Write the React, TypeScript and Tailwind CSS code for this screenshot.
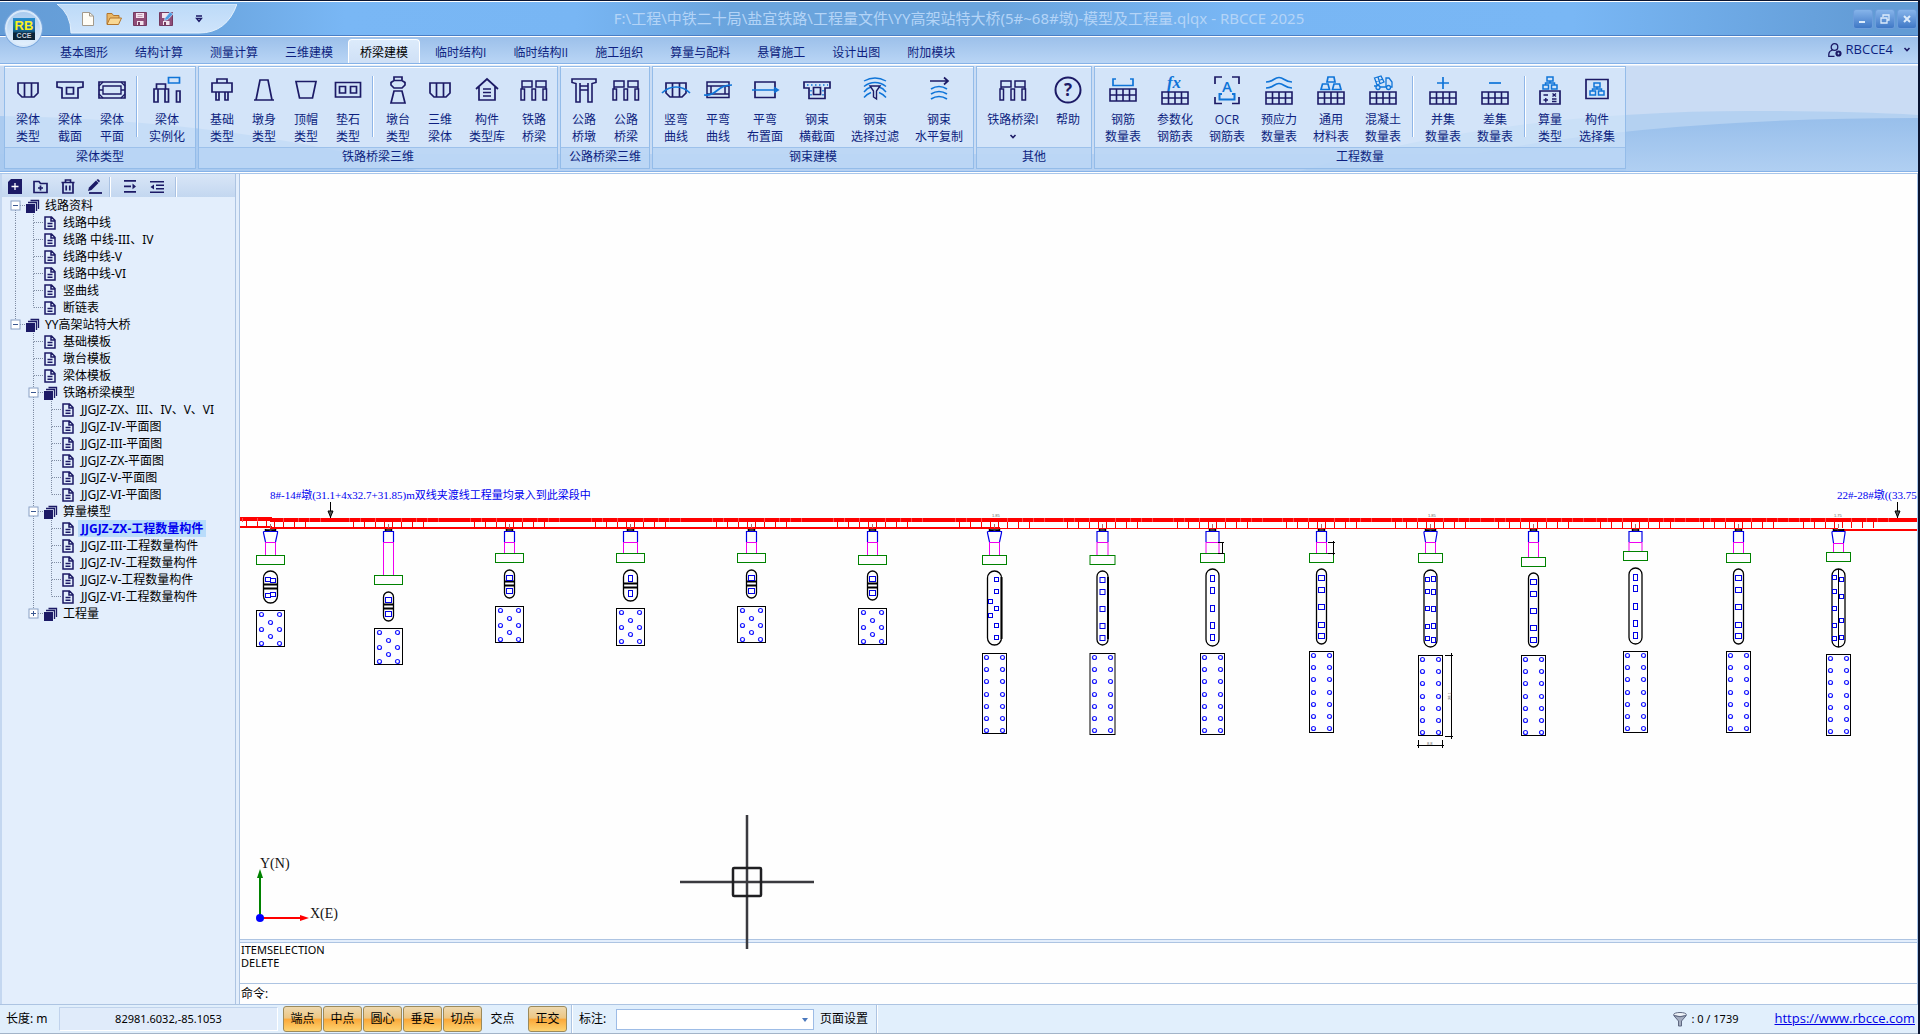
import { ReactNode } from 'react';

const NAVY = '#1c1a66';
const BLUE = '#0f74d8';

/* ---------- ribbon icons, drawn on a 32 × 32 box centred on 0,0 ---------- */

function Glyph({ children }: { children: ReactNode }) {
  return (
    <svg viewBox="-16 -16 32 32" className="size-8 shrink-0" fill="none" stroke={NAVY} strokeWidth="1.7" aria-hidden="true">
      {children}
    </svg>
  );
}

const Beam = () => <path d="M-10 -7H10V3L6 7H-6L-10 3ZM-3.5 -7V7M3.5 -7V7" />;
const Grid = ({ y }: { y: number }) => (
  <path transform={`translate(0 ${y})`} d="M-13 0H13V12H-13ZM-13 6H13M-6.5 0V12M0 0V12M6.5 0V12" strokeWidth="1.6" />
);
const RailBridge = () => (
  <path d="M-12 -9H-2V-3H-12ZM2 -9H12V-3H2ZM-13 -1H-9.5V10H-13ZM-2 -1H1.5V10H-2ZM9 -1H12.5V10H9ZM-12 -3V-1M12 -3V-1" strokeWidth="1.5" />
);
const Org = ({ y = 0 }: { y?: number }) => (
  <path transform={`translate(0 ${y})`} stroke={BLUE} strokeWidth="1.5" d="M-3 -6H3V-2H-3ZM-7 2H-1.5V6H-7ZM1.5 2H7V6H1.5ZM0 -2V0M-4.5 2V0H4.5V2" />
);

const icons: Record<string, ReactNode> = {
  beam: <Beam />,
  section: (
    <>
      <path d="M-13 -8H13V-3L8 -2V8H-8V-2L-13 -3Z" />
      <path d="M-3.5 -2.5H3.5V4H-3.5Z" />
    </>
  ),
  plan: (
    <>
      <path d="M-13 -8H13V8H-13Z" />
      <path d="M-9 -4H9V4H-9ZM-13 -4L-9 -8M-13 4L-9 8M13 -4L9 -8M13 4L9 8M-13 0H-9M9 0H13" strokeWidth="1.4" />
    </>
  ),
  instance: (
    <>
      <path d="M1.5 -12.5H12.5V-7H1.5Z" stroke={BLUE} />
      <path d="M-10.5 -6H-1.5V-1H-10.5ZM-13 -1H-9V12H-13ZM-2 -1H1.5V12H-2ZM9.5 1H13V12H9.5Z" />
    </>
  ),
  foundation: <path d="M-5 -11H5V-7H-5ZM-10 -7H10V2H-10ZM-6 2V10H-3V2M3 2V10H6V2" />,
  pier: <path d="M-4 -10H4L8 10H-8ZM-10 10H10" />,
  cap: <path d="M-10 -8.5H10L6.5 8H-6.5Z" />,
  pad: <path d="M-12.5 -7.5H12.5V7H-12.5ZM-8.5 -3.5H-2.5V3H-8.5ZM2.5 -3.5H8.5V3H2.5Z" />,
  abutment: <path d="M-4 -13H4V-9.5H-4ZM-4 -9.5L-7 -7.5V-5L-4 -2H4L7 -5V-7.5L4 -9.5M-4 1H4L7 13H-7Z" />,
  house: <path d="M-11 -1L0 -11L11 -1M-8 -3V10H8V-3M-4 -1H4M-4 2.5H4M-4 6H4" />,
  rail: <RailBridge />,
  roadPier: <path d="M-12 -11H12V-7.5L8 -6.5V12H4V0H-4V12H-8V-6.5L-12 -7.5ZM-4 -7V0M4 -7V0M-4 -4H4M-4 0H4" strokeWidth="1.6" />,
  bendV: (
    <>
      <Beam />
      <path d="M-14 3Q-8 -3 0 -3T14 3" stroke={BLUE} />
    </>
  ),
  bendH: (
    <>
      <path d="M-11 -8H11V7.5H-11ZM-7 -4H7V4H-7ZM-11 -4H-7M-11 4H-7M7 -4H11M7 4H11" strokeWidth="1.5" />
      <path d="M-14 5C0 6 -2 -5 14 -5" stroke={BLUE} />
    </>
  ),
  layout: (
    <>
      <path d="M-10 -8H10V7.5H-10Z" />
      <path d="M-13 0H12M9 -2.5L13 0L9 2.5" stroke={BLUE} />
    </>
  ),
  tendonSection: (
    <>
      <path d="M-13 -8H13V-2H8V8.500H-8V-2H-13Z" />
      <path d="M-3.500 -2.500H3.500V4.500H-3.500Z" />
      <path d="M-10 -5H11" stroke={BLUE} strokeDasharray="1.500 2.500" strokeWidth="1.500" />
      <path d="M-6 0V7M6 0V7" stroke={BLUE} strokeDasharray="1.500 2.500" strokeWidth="1.500" />
    </>
  ),
  filter: (
    <g strokeWidth="1.400">
      <path d="M-11 -9Q0 -15 11 -9M-11 -3.500Q-6 -7.500 0 -7.500T11 -3.500M-11 2Q-8 -2 -4 -3M11 2Q8 -2 4 -3M-11 7.500Q-8 4 -4 2.500M11 7.500Q8 4 4 2.500" stroke={BLUE} />
      <path d="M-5 -4H5L1.500 1V9L-1.500 7V1Z" />
    </g>
  ),
  copy: (
    <>
      <path d="M-9 -9H9M5 -12.500L9 -9L5 -5.500" />
      <path d="M-8 -1Q0 -6 8 -1M-8 4Q0 -1 8 4M-8 9Q0 4 8 9" stroke={BLUE} />
    </>
  ),
  help: (
    <>
      <circle r="12.500" strokeWidth="2" />
      <text y="6" textAnchor="middle" fill={NAVY} stroke="none" className="font-['Open_Sans'] text-[17px] font-bold">?</text>
    </>
  ),
  rebar: (
    <>
      <path d="M-7 -11H-10V-4.500H10V-11H7" stroke={BLUE} />
      <Grid y={-1} />
    </>
  ),
  param: (
    <>
      <text y="-2" x="-1" textAnchor="middle" fill={BLUE} stroke="none" className="font-['Liberation_Serif'] text-[17px] font-bold italic">fx</text>
      <Grid y={2} />
    </>
  ),
  ocr: (
    <>
      <path d="M-12 -6V-13H-5M12 -6V-13H5M-12 7V13.500H-5M12 7V13.500H5" />
      <text y="2" textAnchor="middle" fill={BLUE} stroke="none" className="font-['Open_Sans'] text-[15px] font-semibold">A</text>
      <path d="M-5 4H-7.500V9.500H7.500V4H5" stroke={BLUE} strokeWidth="2" />
    </>
  ),
  prestress: (
    <>
      <path d="M-13 -8C-6 -8 -5 -12.500 0 -12.500S6 -8 13 -8M-13 -2C-6 -2 -5 -6.500 0 -6.500S6 -2 13 -2" stroke={BLUE} />
      <Grid y={2} />
    </>
  ),
  material: (
    <>
      <path d="M-3 -13H3L4 -8H-4ZM-8.500 -6H-3L-1.500 -0.500H-10ZM3 -6H8.500L10 -0.500H1.500Z" stroke={BLUE} />
      <Grid y={2} />
    </>
  ),
  concrete: (
    <>
      <g stroke={BLUE} strokeWidth="1.300">
        <path d="M-8.500 -12L-2 -14L1 -8L-6 -5ZM-5 -13L-3 -6.500M-7 -8.500L0 -11M-9 -4H-7M-3 -3H3.500M3 -3V-12H6L9 -8V-3H8" />
        <circle cx="-5" cy="-2.500" r="2" />
        <circle cx="5.500" cy="-2.500" r="2" />
      </g>
      <Grid y={2} />
    </>
  ),
  union: (
    <>
      <path d="M-6 -7H6M0 -13V-1" stroke={BLUE} />
      <Grid y={2} />
    </>
  ),
  diff: (
    <>
      <path d="M-6 -7H6" stroke={BLUE} />
      <Grid y={2} />
    </>
  ),
  calc: (
    <>
      <Org y={-7} />
      <path d="M-10 1H10V14H-10Z" />
      <path d="M-6.500 5H-2M-6.500 10H-2M-4.200 8V12.500M2.500 3.500L6 6.500M6 3.500L2.500 6.500M2 9H6.500M2 11.500H6.500" strokeWidth="1.400" />
    </>
  ),
  pick: (
    <>
      <path d="M-11 -10.500H11V8.500H-11Z" />
      <Org y={-1} />
    </>
  ),
};

/* ---------- ribbon ---------- */

type Item = { icon: string; a: string; b?: string; size?: 's' | 'm' | 'l' | 'xl'; menu?: boolean; sep?: boolean };

const widths = { s: 'w-[42px]', m: 'w-[52px]', l: 'w-16', xl: 'w-[68px]' };

const groups: { title: string; items: Item[] }[] = [
  {
    title: '梁体类型',
    items: [
      { icon: 'beam', a: '梁体', b: '类型' },
      { icon: 'section', a: '梁体', b: '截面' },
      { icon: 'plan', a: '梁体', b: '平面' },
      { icon: 'instance', a: '梁体', b: '实例化', size: 'm', sep: true },
    ],
  },
  {
    title: '铁路桥梁三维',
    items: [
      { icon: 'foundation', a: '基础', b: '类型' },
      { icon: 'pier', a: '墩身', b: '类型' },
      { icon: 'cap', a: '顶帽', b: '类型' },
      { icon: 'pad', a: '垫石', b: '类型' },
      { icon: 'abutment', a: '墩台', b: '类型', sep: true },
      { icon: 'beam', a: '三维', b: '梁体' },
      { icon: 'house', a: '构件', b: '类型库', size: 'm' },
      { icon: 'rail', a: '铁路', b: '桥梁' },
    ],
  },
  {
    title: '公路桥梁三维',
    items: [
      { icon: 'roadPier', a: '公路', b: '桥墩' },
      { icon: 'rail', a: '公路', b: '桥梁' },
    ],
  },
  {
    title: '钢束建模',
    items: [
      { icon: 'bendV', a: '竖弯', b: '曲线' },
      { icon: 'bendH', a: '平弯', b: '曲线' },
      { icon: 'layout', a: '平弯', b: '布置面', size: 'm' },
      { icon: 'tendonSection', a: '钢束', b: '横截面', size: 'm' },
      { icon: 'filter', a: '钢束', b: '选择过滤', size: 'l' },
      { icon: 'copy', a: '钢束', b: '水平复制', size: 'l' },
    ],
  },
  {
    title: '其他',
    items: [
      { icon: 'rail', a: '铁路桥梁I', size: 'xl', menu: true },
      { icon: 'help', a: '帮助' },
    ],
  },
  {
    title: '工程数量',
    items: [
      { icon: 'rebar', a: '钢筋', b: '数量表', size: 'm' },
      { icon: 'param', a: '参数化', b: '钢筋表', size: 'm' },
      { icon: 'ocr', a: 'OCR', b: '钢筋表', size: 'm' },
      { icon: 'prestress', a: '预应力', b: '数量表', size: 'm' },
      { icon: 'material', a: '通用', b: '材料表', size: 'm' },
      { icon: 'concrete', a: '混凝土', b: '数量表', size: 'm' },
      { icon: 'union', a: '并集', b: '数量表', size: 'm', sep: true },
      { icon: 'diff', a: '差集', b: '数量表', size: 'm' },
      { icon: 'calc', a: '算量', b: '类型', sep: true },
      { icon: 'pick', a: '构件', b: '选择集', size: 'm' },
    ],
  },
];

const Chevron = () => (
  <svg viewBox="0 0 8 6" className="h-1.5 w-2" fill="none" stroke={NAVY} strokeWidth="1.600" aria-hidden="true">
    <path d="M1.500 1L4 3.500L6.500 1" />
  </svg>
);

function RibbonItem({ item }: { item: Item }) {
  return (
    <>
      {item.sep && <span className="mx-[3px] mt-2 h-[61px] w-0.5 border-l border-[#8fb6e8] bg-white" />}
      <button className={`flex flex-col items-center pt-1.5 ${widths[item.size ?? 's']}`}>
        <Glyph>{icons[item.icon]}</Glyph>
        <span className="mt-[5px] whitespace-nowrap leading-[17px]">{item.a}</span>
        {item.b && <span className="whitespace-nowrap leading-[17px]">{item.b}</span>}
        {item.menu && <span className="flex h-[17px] items-center"><Chevron /></span>}
      </button>
    </>
  );
}

function Ribbon() {
  return (
    <section className="relative flex h-[109px] shrink-0 gap-0.5 border-y border-[#86b2e8] bg-[#cadcf4] pl-1 pt-0.5 text-xs text-[#0d1f80]">
      <svg viewBox="0 0 1918 107" preserveAspectRatio="none" className="absolute inset-0 size-full" aria-hidden="true">
        <defs>
          <linearGradient id="deep" x1="0" y1="0" x2="0" y2="1">
            <stop offset="0" stopColor="#98bfeb" />
            <stop offset="1" stopColor="#b0cff2" />
          </linearGradient>
        </defs>
        <path d="M1300 107Q1500 47 1750 47Q1850 47 1918 51V107Z" fill="#b4d1f1" />
        <path d="M1400 107Q1600 54 1918 54V107Z" fill="url(#deep)" />
        <path d="M0 52Q240 56 420 107H0Z" fill="#abcbf0" />
        <path d="M0 90H1626V107H0Z" fill="#a9caf0" fillOpacity="0.600" />
        <path d="M0 0.500H1918" stroke="#fff" strokeWidth="2" />
      </svg>
      {groups.map((g) => (
        <div key={g.title} className="relative flex h-[103px] flex-col border border-[#94bce9] bg-[#d9e9fb]/60">
          <div className="flex grow border-t border-white px-0.5">
            {g.items.map((it) => (
              <RibbonItem key={it.icon + it.a} item={it} />
            ))}
          </div>
          <div className="h-[21px] border-t border-[#9dc1eb] bg-[#b3d1f3]/70 text-center leading-[17px]">{g.title}</div>
        </div>
      ))}
    </section>
  );
}

/* ---------- title bar and tabs ---------- */

function QuickAccess() {
  const btn = 'relative flex w-[26px] justify-center';
  return (
    <div className="relative ml-[57px] flex h-[30px] w-[180px] items-center pl-[18px]">
      <svg viewBox="0 0 180 30" className="absolute inset-0 size-full" aria-hidden="true">
        <defs>
          <linearGradient id="qat" x1="0" y1="0" x2="0" y2="1">
            <stop offset="0" stopColor="#bcdaf8" />
            <stop offset="1" stopColor="#cfe4fb" />
          </linearGradient>
        </defs>
        <path d="M0 0H180Q170 29 142 29H14Q14 10 0 0Z" fill="url(#qat)" stroke="#e4f1fd" />
      </svg>
      <button className={btn} aria-label="新建">
        <svg viewBox="0 0 14 14" className="size-3.5"><path d="M1.500 0.500H8.500L12.500 4V13.500H1.500Z" fill="#fffdf6" stroke="#a39a8c" /><path d="M8.500 0.500V4H12.500" fill="none" stroke="#a39a8c" /></svg>
      </button>
      <button className={btn} aria-label="打开">
        <svg viewBox="0 0 16 14" className="h-3.5 w-4"><path d="M1 12V1.500H6L7.500 3.500H13V6" fill="#e9b765" stroke="#b3752c" /><path d="M1 12.500L4 6H15.500L12.500 12.500Z" fill="#f9d894" stroke="#b3752c" /></svg>
      </button>
      <button className={btn} aria-label="保存">
        <svg viewBox="0 0 14 14" className="size-3.5"><path d="M0.500 0.500H13.500V13.500H0.500Z" fill="#8f4d78" stroke="#74395f" /><path d="M3 1H11V6H3ZM4 9H10.500V13H4Z" fill="#f3e4ee" /><path d="M4.500 2.500H9.500M4.500 4.500H9.500" stroke="#b98aa8" strokeWidth="0.800" /><path d="M5 10H7V13H5Z" fill="#74395f" /></svg>
      </button>
      <button className={btn} aria-label="另存为">
        <svg viewBox="0 0 14 14" className="size-3.5"><path d="M0.500 0.500H13.500V13.500H0.500Z" fill="#8f4d78" stroke="#74395f" /><path d="M3 1H11V6H3ZM4 9H10.500V13H4Z" fill="#f3e4ee" /><path d="M5 10H7V13H5Z" fill="#74395f" /><path d="M6 6L11 0L14 2L9 7.500L5.500 8.500Z" fill="#4e9be2" stroke="#cfe4fb" strokeWidth="0.700" /></svg>
      </button>
      <button className="relative ml-3 flex w-4 justify-center" aria-label="自定义快速访问工具栏">
        <svg viewBox="0 0 8 8" className="size-2" fill="none" stroke={NAVY} strokeWidth="1.300"><path d="M1 1H7M1.500 3.500H6.500L4 6.500Z" /></svg>
      </button>
    </div>
  );
}

function TitleBar() {
  const win = 'flex size-5 items-center justify-center rounded-[3px] border border-[#6c9ddb] bg-gradient-to-b from-[#86b4ea] to-[#3f78c6]';
  return (
    <header className="relative flex h-[34px] shrink-0 items-start justify-between border-b border-[#4a7fc6] bg-[linear-gradient(90deg,#649cd6_0%,#6aa4de_10%,#79b7f5_18%,#78b6f4_30%,#6aa4dd_38%,#6aa4dd_52%,#78b6f4_64%,#79b7f5_82%,#629bd5_98%)] pt-0.5">
      <QuickAccess />
      <h1 className="absolute inset-x-0 top-1.5 text-center font-['Noto_Sans','Noto_Sans_CJK_SC',sans-serif] text-[15px] leading-5 text-[#b4d4f7]">
        F:\工程\中铁二十局\盐宜铁路\工程量文件\YY高架站特大桥(5#~68#墩)-模型及工程量.qlqx - RBCCE 2025
      </h1>
      <div className="relative flex gap-0.5 pr-px pt-[5px]">
        <button className={win} aria-label="最小化">
          <svg viewBox="0 0 10 10" className="size-2.5"><path d="M1 8H7" stroke="#dcebfb" strokeWidth="2" /></svg>
        </button>
        <button className={win} aria-label="还原">
          <svg viewBox="0 0 10 10" className="size-2.5" fill="none" stroke="#dcebfb" strokeWidth="1.300"><path d="M3 3V1H9V6H7M1 4H7V9H1Z" /></svg>
        </button>
        <button className={win} aria-label="关闭">
          <svg viewBox="0 0 10 10" className="size-2.5"><path d="M2 2L8 8M8 2L2 8" stroke="#dcebfb" strokeWidth="2" /></svg>
        </button>
      </div>
    </header>
  );
}

const tabs = ['基本图形', '结构计算', '测量计算', '三维建模', '桥梁建模', '临时结构I', '临时结构II', '施工组织', '算量与配料', '悬臂施工', '设计出图', '附加模块'];

function TabRow() {
  return (
    <nav className="relative flex h-[27px] shrink-0 items-end justify-between border-t border-white bg-gradient-to-b from-[#9cc0ea] to-[#b9d5f5] text-xs text-[#0d1f80]">
      <div className="flex gap-[3px] pl-12">
        {tabs.map((t) =>
          t === '桥梁建模' ? (
            <button key={t} aria-current="page" className="-mb-px h-6 rounded-t border border-b-0 border-white bg-gradient-to-b from-[#dcebfb] to-[#cfe0f6] px-[11px] pt-px leading-[23px] text-black">{t}</button>
          ) : (
            <button key={t} className="h-6 px-3 pt-0.5 leading-6">{t}</button>
          ),
        )}
      </div>
      <button className="mr-[7px] flex h-6 items-center gap-1 pb-0.5 text-[13px]">
        <svg viewBox="0 0 14 14" className="size-3.5" fill="none" stroke={NAVY} strokeWidth="1.300" aria-hidden="true">
          <circle cx="6.500" cy="4" r="3.300" />
          <path d="M6.500 13.300H0.800V11Q1 8 4.500 7" />
          <circle cx="10.500" cy="10.500" r="2" strokeWidth="2.200" />
        </svg>
        RBCCE4
        <span className="ml-1.5"><Chevron /></span>
      </button>
      <button aria-label="RBCCE" className="absolute -top-[27px] left-[5px] flex size-[37px] items-center justify-center rounded-full border-2 border-[#d7e8fa] bg-gradient-to-b from-[#a9cbef] to-[#e3f0fd] shadow-[0_0_0_1px_#7aa8de]">
        <svg viewBox="0 0 22 22" className="size-[22px]" aria-hidden="true">
          <defs>
            <linearGradient id="logo" x1="0" y1="0" x2="0" y2="1">
              <stop offset="0" stopColor="#2b8fd0" />
              <stop offset="0.600" stopColor="#15608f" />
              <stop offset="0.700" stopColor="#0b2438" />
            </linearGradient>
          </defs>
          <rect width="22" height="22" fill="url(#logo)" />
          <text x="11" y="12" textAnchor="middle" fill="#fdf21c" className="font-['Liberation_Sans'] text-[13px] font-bold">RB</text>
          <text x="11" y="20" textAnchor="middle" fill="#c8d3de" className="font-['Liberation_Sans'] text-[7px] font-bold">CCE</text>
        </svg>
      </button>
    </nav>
  );
}

/* ---------- project tree ---------- */

/* Connector codes: I = line through, T = branch, L = last branch, _ = blank,
   a = open node (line below), b = open node (line above), c = open node (both), p = closed node. */
const rows: [string, string][] = [
  ['a', '线路资料'],
  ['IT', '线路中线'],
  ['IT', '线路 中线-III、IV'],
  ['IT', '线路中线-V'],
  ['IT', '线路中线-VI'],
  ['IT', '竖曲线'],
  ['IL', '断链表'],
  ['b', 'YY高架站特大桥'],
  ['_T', '基础模板'],
  ['_T', '墩台模板'],
  ['_T', '梁体模板'],
  ['_c', '铁路桥梁模型'],
  ['_IT', 'JJGJZ-ZX、III、IV、V、VI'],
  ['_IT', 'JJGJZ-IV-平面图'],
  ['_IT', 'JJGJZ-III-平面图'],
  ['_IT', 'JJGJZ-ZX-平面图'],
  ['_IT', 'JJGJZ-V-平面图'],
  ['_IL', 'JJGJZ-VI-平面图'],
  ['_c', '算量模型'],
  ['_IT', 'JJGJZ-ZX-工程数量构件'],
  ['_IT', 'JJGJZ-III-工程数量构件'],
  ['_IT', 'JJGJZ-IV-工程数量构件'],
  ['_IT', 'JJGJZ-V-工程数量构件'],
  ['_IL', 'JJGJZ-VI-工程数量构件'],
  ['_p', '工程量'],
];

function Connector({ code }: { code: string }) {
  const above = 'ITLbcp'.includes(code);
  const below = 'ITac'.includes(code);
  const arm = 'TLabcp'.includes(code);
  const node = 'abcp'.includes(code);
  return (
    <svg viewBox="0 0 18 17" className="h-[17px] w-[18px] shrink-0" fill="none" aria-hidden="true">
      <g stroke="#7f8ca3" strokeDasharray="1 1">
        {above && <path d="M8.500 0V8.500" />}
        {below && <path d="M8.500 9V17" />}
        {arm && <path d="M9 8.500H18" />}
      </g>
      {node && (
        <>
          <rect x="4" y="4" width="9" height="9" fill="#fff" stroke="#8aa0c4" />
          <path d="M6 8.500H11" stroke="#3b5891" />
          {code === 'p' && <path d="M8.500 6V11" stroke="#3b5891" />}
        </>
      )}
    </svg>
  );
}

function Tree() {
  return (
    <ul className="pl-[5px] text-xs leading-[17px] text-black">
      {rows.map(([lines, label]) => {
        const parent = 'abcp'.includes(lines[lines.length - 1]);
        const active = label === 'JJGJZ-ZX-工程数量构件';
        return (
          <li key={label} className="flex h-[17px]">
            {lines.split('').map((c, i) => (
              <Connector key={i} code={c} />
            ))}
            <button className="flex items-center whitespace-nowrap">
              {parent ? (
                <svg viewBox="0 0 14 14" className="ml-px mr-1 size-3.5" aria-hidden="true">
                  <path d="M0 5H9V14H0Z" fill={NAVY} />
                  <path d="M2 3.500H10.500V12M4.500 1.500H12.500V10" fill="none" stroke={NAVY} strokeWidth="1.300" />
                </svg>
              ) : (
                <svg viewBox="0 0 12 14" className="ml-px mr-1 h-3.5 w-3" fill="none" stroke={NAVY} strokeWidth="1.500" aria-hidden="true">
                  <path d="M1 1H7.500L11 4.500V13H1ZM7 1V5H11M3.500 7.500H8.500M3.500 10.300H8.500" />
                </svg>
              )}
              <span className={active ? 'bg-[#b9dcfb] px-[3px] font-bold text-[#0000f0]' : parent ? 'px-px' : 'px-[3px]'}>{label}</span>
            </button>
          </li>
        );
      })}
    </ul>
  );
}

function Sidebar() {
  const tool = 'flex w-[27px] justify-center';
  const sep = 'h-5 w-0.5 border-l border-[#a9c1e2] bg-white';
  return (
    <aside className="w-[235px] shrink-0 border-l-2 border-[#c4d7f0] bg-[#e3eefc] font-['Noto_Sans','Noto_Sans_CJK_SC',sans-serif]">
      <div className="flex h-[23px] items-center bg-gradient-to-b from-[#d9e6f7] to-[#c3d7f0] pt-0.5">
        <button className="flex w-[25px] justify-center" aria-label="新建文件">
          <svg viewBox="0 0 14 15" className="h-[15px] w-3.5"><path d="M3 0H14V15H0V3Z" fill={NAVY} /><path d="M7 4V11M3.500 7.500H10.500" stroke="#fff" strokeWidth="1.300" /></svg>
        </button>
        <button className={tool} aria-label="新建文件夹">
          <svg viewBox="0 0 15 14" className="h-3.5 w-[15px]" fill="none" stroke={NAVY} strokeWidth="1.700"><path d="M1 1.500H6L7.500 3.500H14V12.500H1ZM7.500 5.500V10.500M5 8H10" /></svg>
        </button>
        <button className={tool} aria-label="删除">
          <svg viewBox="0 0 14 15" className="h-[15px] w-3.5" fill="none" stroke={NAVY} strokeWidth="1.700"><path d="M0.500 3.500H13.500M4.500 3V1H9.500V3M2 4V14H12V4M5.200 6.500V11.500M8.800 6.500V11.500" /></svg>
        </button>
        <button className={tool} aria-label="重命名">
          <svg viewBox="0 0 15 15" className="size-[15px]"><path d="M1 12L2 8.500L9 1.500L11.500 4L4.500 11Z" fill={NAVY} /><path d="M9.500 1L11 0L13 2L12 3.500Z" fill={NAVY} /><path d="M2 14H15" stroke={NAVY} strokeWidth="1.800" /></svg>
        </button>
        <span className={`${sep} ml-px mr-[5px]`} />
        <button className={tool} aria-label="全部展开">
          <svg viewBox="0 0 12 13" className="h-[13px] w-3" fill={NAVY}><path d="M0 0H12V1.800H0ZM0 5.500H7V7.200H0ZM0 11H12V12.800H0ZM8.500 3.500L12 6.400L8.500 9.300Z" /></svg>
        </button>
        <button className={tool} aria-label="全部折叠">
          <svg viewBox="0 0 14 12" className="h-3 w-3.5" fill={NAVY}><path d="M0 0H14V1.500H0ZM6 3.500H14V5H6ZM6 7H14V8.500H6ZM0 10.500H14V12H0ZM4 3.500V8.500L0.500 6Z" /></svg>
        </button>
        <span className={`${sep} ml-[5px]`} />
      </div>
      <Tree />
    </aside>
  );
}

/* ---------- drawing ---------- */

type Square = [number, number, number, number];
type Pier = {
  x: number;
  cap: number;
  flared?: boolean;
  capBottom?: number;
  foot: number;
  base: number;
  section: [number, number];
  plan: [number, number];
  squares: Square[];
};

const two = (h: number, w = 6, t = 5): Square[] => [[-w / 2, 5, w, t], [-w / 2, h - 5 - t, w, t]];
const column = (dx: number, w: number, ys: number[], h = 5): Square[] => ys.map((y) => [dx - w / 2, y, w, h]);
const five = [6, 18, 35, 52, 64];

const piers: Pier[] = [
  { x: 270, cap: 14, flared: true, foot: 555, base: 28, section: [571, 603], plan: [610, 647], squares: [[-5, 6, 5, 4], [0, 7, 5, 4], [-5, 22, 5, 4], [0, 21, 5, 4]] },
  { x: 388, cap: 10, foot: 575, base: 28, section: [592, 621], plan: [628, 665], squares: two(29) },
  { x: 509, cap: 10, foot: 553, base: 28, section: [570, 598], plan: [606, 643], squares: two(28) },
  { x: 630, cap: 14, foot: 553, base: 28, section: [570, 601], plan: [608, 646], squares: two(31, 4, 6) },
  { x: 751, cap: 10, foot: 553, base: 28, section: [570, 598], plan: [606, 643], squares: two(28) },
  { x: 872, cap: 10, foot: 555, base: 28, section: [571, 600], plan: [608, 645], squares: two(29) },
  { x: 994, cap: 14, flared: true, foot: 555, base: 24, section: [571, 645], plan: [653, 734], squares: [...column(2, 4, five, 4), ...column(-4, 4, [28, 42], 4)] },
  { x: 1102, cap: 11, foot: 555, base: 25, section: [571, 645], plan: [653, 735], squares: column(0, 5, five) },
  { x: 1212, cap: 13, foot: 553, base: 24, section: [569, 646], plan: [653, 735], squares: column(0, 4, [6, 18, 36, 53, 65], 6) },
  { x: 1321, cap: 10, foot: 553, base: 24, section: [569, 644], plan: [651, 733], squares: column(0, 6, [6, 18, 35, 53, 64], 5) },
  { x: 1430, cap: 13, flared: true, foot: 553, base: 24, section: [570, 647], plan: [655, 736], squares: [...column(-3, 4, [7, 19, 36, 54, 66], 4), ...column(3, 4, [6, 19, 36, 53, 67], 5)] },
  { x: 1533, cap: 10, foot: 557, base: 24, section: [573, 647], plan: [655, 736], squares: column(0, 6, five) },
  { x: 1635, cap: 13, foot: 551, base: 24, section: [568, 644], plan: [651, 733], squares: column(0, 4, [6, 17, 35, 52, 64], 6) },
  { x: 1738, cap: 10, foot: 553, base: 24, section: [569, 644], plan: [651, 733], squares: column(0, 6, [6, 18, 35, 53, 64]) },
  { x: 1838, cap: 13, flared: true, capBottom: 543, foot: 552, base: 24, section: [569, 647], plan: [654, 736], squares: [...column(-4, 4, [6, 20, 37, 54, 67], 4), ...column(3, 4, [8, 25, 49, 66], 4)] },
];

function PierDrawing({ p }: { p: Pier }) {
  const half = p.cap / 2;
  const stem = p.flared ? 5 : half;
  const capBottom = p.capBottom ?? 542;
  const [s0, s1] = p.section;
  const [q0, q1] = p.plan;
  const short = p.base > 26;
  const mid = Math.round((s0 + s1) / 2) - 0.5;
  const piles: [number, number][] = short
    ? [[-9, 4], [9, 4], [0, 12], [-9, 19], [9, 19], [0, 26], [-9, 33], [9, 33]]
    : [0, 1, 2, 3, 4, 5, 6].flatMap((i) => [[-8, 4 + Math.round(i * 12.2)], [8, 4 + Math.round(i * 12.2)]] as [number, number][]);
  return (
    <g fill="none" transform={`translate(${p.x + 0.5} 0)`}>
      <path d={p.flared ? 'M-5 529V531H-1M5 529V531H1M-5 530H5' : 'M-3 529V531M3 529V531M-3 530H3'} stroke="#000" strokeWidth="1.500" />
      <path d={`M${-stem} ${capBottom}V${p.foot}M${stem} ${capBottom}V${p.foot}M${-stem} ${capBottom}.500H${stem}`} stroke="#f000f0" />
      <path
        d={p.flared ? `M${-half} 531.500H${half}V533L5 ${capBottom}M${-half} 531.500V533L-5 ${capBottom}` : `M${-half} ${capBottom}V531.500H${half}V${capBottom}`}
        stroke="#0000e6"
        strokeWidth="1.200"
      />
      <rect x={-p.base / 2} y={p.foot + 0.5} width={p.base} height="9" stroke="#008200" />
      <rect x={-half} y={s0} width={p.cap} height={s1 - s0} rx={half} ry={half} stroke="#000" strokeWidth="1.300" />
      {short && <path d={`M${-half} ${mid - 2}H${half}M${-half} ${mid + 2}H${half}`} stroke="#000" strokeWidth="2" />}
      {p.x === 1838 && <path d={`M0 ${s0}V${s1}`} stroke="#000" />}
      {(p.x === 994 || p.x === 1102) && <path d={`M${half} ${s0 + 6}V${s1 - 6}`} stroke="#000" strokeWidth="2" />}
      {p.squares.map(([x, y, w, h], i) => (
        <rect key={i} x={x} y={s0 + y + 0.5} width={w} height={h} stroke="#0000e6" />
      ))}
      <rect x={-p.base / 2} y={q0 + 0.5} width={p.base} height={q1 - q0 - 1} stroke="#000" />
      {piles.map(([x, y], i) => (
        <circle key={i} cx={x} cy={q0 + y + 0.5} r="2" stroke="#1a1aff" strokeWidth="1.200" />
      ))}
    </g>
  );
}

function Arrow({ x }: { x: number }) {
  return (
    <g stroke="#000">
      <path d={`M${x}.500 502V518`} />
      <path d={`M${x - 2} 511H${x + 3}L${x}.500 517Z`} fill="#555" />
    </g>
  );
}

function Drawing() {
  const offsets = [-35, -24, -13, -4, 4, 13, 24, 35];
  const dense = [-39, -28, -13, 13, 28, 39, 50];
  return (
    <svg className="block size-full" role="img" aria-label="桥梁立面与平面图">
      <g transform="translate(-240 -174)">
        <path d="M240 517H272V521H240ZM240 526H272V528H240Z" fill="#f00" />
        <path d="M270 518H2400V522H270ZM270 527H1000V529H270ZM1000 528H1838V529H1000ZM1838 529H2400V531H1838Z" fill="#f00" />
        {piers.map((p) => (
          <g key={p.x}>
            {offsets.map((o) => (
              <path key={o} d={`M${p.x + o}.500 521V528`} stroke="#f00" />
            ))}
            {dense.map((o) => (
              <path key={o} d={`M${p.x + o}.500 518V522`} stroke="#ff5050" />
            ))}
            <path d={`M${p.x}.500 524V528`} stroke="#b46a6a" />
          </g>
        ))}
        {piers.map((p) => (
          <PierDrawing key={p.x} p={p} />
        ))}
        <g stroke="#000" fill="none">
          <path d="M1218 542.500H1224M1218 553.500H1224M1222.500 542V554M1328 542.500H1335M1328 553.500H1335M1333.500 541V555" />
          <path d="M1445 655.500H1453M1445 736.500H1453M1451.500 653V739M1418.500 740V748M1442.500 740V748M1417 745.500H1444" />
        </g>
        <g fill="#666" className="font-['Liberation_Sans'] text-[4px]">
          <text x="992" y="517">1.85</text>
          <text x="1428" y="517">1.85</text>
          <text x="1834" y="517">1.75</text>
          <text x="1427" y="745">8.8</text>
          <text transform="translate(1451 700) rotate(-90)">28.1</text>
        </g>
        <g fill="#0000f0" className="font-['Liberation_Serif','Noto_Sans_CJK_SC',serif] text-[11px]">
          <text x="270" y="499">8#-14#墩(31.1+4x32.7+31.85)m双线夹渡线工程量均录入到此梁段中</text>
          <text x="1837" y="499">22#-28#墩((33.75</text>
        </g>
        <Arrow x={330} />
        <Arrow x={1897} />
        <path d="M260 918V875" stroke="#008200" strokeWidth="2" />
        <path d="M257 878L260 869L263 878Z" fill="#008200" />
        <path d="M260 918H302" stroke="#f00" strokeWidth="2" />
        <path d="M300 915L309 918L300 921Z" fill="#f00" />
        <circle cx="260" cy="918" r="4" fill="#00f" />
        <g fill="#111" className="font-['Liberation_Serif'] text-[14px]">
          <text x="260" y="868">Y(N)</text>
          <text x="310" y="918">X(E)</text>
        </g>
      </g>
    </svg>
  );
}

function Workspace() {
  return (
    <main className="relative flex min-w-0 grow flex-col border-r border-[#a9c6ea] bg-[#fefefe]">
      <div className="min-h-0 grow overflow-hidden">
        <Drawing />
      </div>
      <div className="h-1 shrink-0 border-y border-[#adc4e2] bg-[#e3eefc]" />
      <div className="h-[41px] shrink-0 border-b border-[#adc4e2] pl-px font-['Noto_Sans',sans-serif] text-[11px] leading-[13px] text-black">
        <p>ITEMSELECTION</p>
        <p>DELETE</p>
      </div>
      <label className="flex h-5 shrink-0 items-center pl-px text-xs text-black">
        命令:
        <input type="text" className="ml-1 h-full grow bg-transparent outline-none" />
      </label>
      {/* crosshair cursor */}
      <svg viewBox="0 0 134 134" className="pointer-events-none absolute left-[440px] top-[641px] size-[134px]" fill="none" stroke="#3a3a3f" strokeWidth="2.500" aria-hidden="true">
        <path d="M0 67H134M67 0V134" />
        <rect x="53" y="53" width="28" height="28" rx="1" stroke="#1f1f22" />
      </svg>
    </main>
  );
}

/* ---------- status bar ---------- */

function StatusBar() {
  const snaps = ['端点', '中点', '圆心', '垂足', '切点'];
  const on = 'h-[26px] w-[39px] rounded-[3px] border border-[#9c8a5a] bg-[linear-gradient(180deg,#eed9b0_0%,#ecc684_45%,#fba93a_52%,#fdd371_100%)]';
  return (
    <footer className="flex h-[30px] shrink-0 items-center border-y border-t-[#adc4e2] border-b-[#a3b4c8] bg-[#e1effc] font-['Noto_Sans','Noto_Sans_CJK_SC',sans-serif] text-xs text-black">
      <span className="w-[59px] pl-1.5">长度: m</span>
      <output className="h-6 w-[219px] border border-b-white border-l-[#c0d3ec] border-r-white border-t-[#c0d3ec] bg-[#e0ebfa] text-center text-[11px] leading-[22px]">82981.6032,-85.1053</output>
      <div className="ml-[5px] flex gap-px">
        {snaps.map((s) => (
          <button key={s} aria-pressed="true" className={on}>{s}</button>
        ))}
        <button aria-pressed="false" className="h-[26px] w-[39px]">交点</button>
        <button aria-pressed="true" className={`${on} ml-[5px]`}>正交</button>
      </div>
      <span className="ml-1 h-7 w-0.5 border-l border-[#adc4e2] bg-white" />
      <label htmlFor="dimension" className="ml-1.5 w-[37px] whitespace-nowrap">标注:</label>
      <div className="relative">
        <select id="dimension" className="block h-[21px] w-[198px] appearance-none border border-[#9dbce6] bg-white" />
        <svg viewBox="0 0 6 4" className="pointer-events-none absolute right-1.5 top-[9px] h-1 w-1.5" fill="#4a78bd" aria-hidden="true"><path d="M0 0H6L3 4Z" /></svg>
      </div>
      <button className="ml-1.5">页面设置</button>
      <span className="ml-2 h-7 w-0.5 border-l border-[#adc4e2] bg-white" />
      <svg viewBox="0 0 14 15" className="ml-auto h-[15px] w-3.5" aria-hidden="true">
        <ellipse cx="7" cy="2.500" rx="6.300" ry="2" fill="#eef2f7" stroke="#5e6780" />
        <path d="M0.700 3.500L5.500 9V14H8.500V9L13.300 3.500Q7 6 0.700 3.500Z" fill="#a4adc0" stroke="#5e6780" />
      </svg>
      <span className="ml-1 mr-9 text-[11px]">: 0 / 1739</span>
      <a href="https://www.rbcce.com" className="mr-[3px] font-['Open_Sans'] text-[13px] text-[#0000e6] underline">https://www.rbcce.com</a>
    </footer>
  );
}

export default function App() {
  return (
    <div className="flex h-screen flex-col overflow-hidden border-r-2 border-t border-[#0a1430] bg-[#cadcf4] font-['Open_Sans','Noto_Sans_CJK_SC',sans-serif]">
      <div className="h-px shrink-0 bg-white" />
      <TitleBar />
      <TabRow />
      <Ribbon />
      <div className="h-0.5 shrink-0 border-t border-white bg-[#a9c6ea]" />
      <div className="flex min-h-0 grow">
        <Sidebar />
        <div className="w-[5px] shrink-0 border-x border-[#adc4e2] bg-[#e3eefc]" />
        <Workspace />
      </div>
      <StatusBar />
    </div>
  );
}
